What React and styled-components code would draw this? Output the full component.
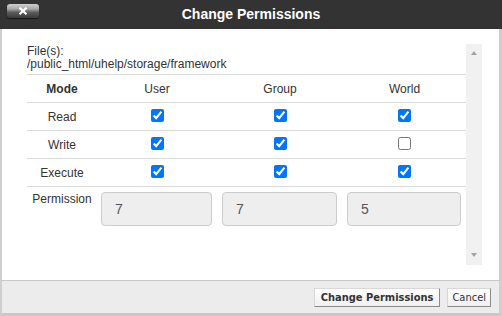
import styled, { createGlobalStyle } from "styled-components";

const GlobalStyle = createGlobalStyle`
  html, body {
    margin: 0;
    padding: 0;
    background: #fff;
  }
  body {
    font-family: "Liberation Sans", Arial, sans-serif;
  }
`;

const Dialog = styled.div`
  width: 502px;
  height: 316px;
  display: flex;
  flex-direction: column;
  box-sizing: border-box;
`;

const TitleBar = styled.div`
  position: relative;
  height: 29px;
  flex-shrink: 0;
  background: #333;
  display: flex;
  align-items: center;
  justify-content: center;
`;

const Title = styled.h1`
  margin: 0;
  color: #fff;
  font-size: 14px;
  font-weight: bold;
  line-height: 29px;
`;

const CloseButton = styled.button`
  position: absolute;
  left: 7px;
  top: 4px;
  width: 32px;
  height: 14px;
  padding: 0;
  border: 0;
  border-radius: 3px;
  background: linear-gradient(#d0d0d0 0%, #a8a8a8 35%, #5c5c5c 60%, #3a3a3a 100%);
  box-shadow: 0 1px 1px rgba(0, 0, 0, 0.6);
  display: flex;
  align-items: center;
  justify-content: center;
`;

const Body = styled.div`
  flex: 1;
  background: #fff;
  border-left: 2px solid #cfcfcf;
  border-right: 3px solid #cfcfcf;
  padding: 15px 17px 15px 25px;
  box-sizing: border-box;
  display: flex;
`;

const Scroller = styled.div`
  flex: 1;
  height: 221px;
  overflow: hidden;
  color: #333;
  font-size: 12px;
`;

const ScrollTrack = styled.div`
  width: 16px;
  height: 221px;
  flex-shrink: 0;
  background: #f1f1f1;
  display: flex;
  flex-direction: column;
  justify-content: space-between;
  align-items: center;
  padding: 7px 0 8px;
  box-sizing: border-box;
`;

const Arrow = styled.span`
  width: 0;
  height: 0;
  border-left: 3.5px solid transparent;
  border-right: 3.5px solid transparent;
  ${(p) =>
    p.$down
      ? "border-top: 4px solid #a3a3a3;"
      : "border-bottom: 4px solid #a3a3a3;"}
`;

const FileInfo = styled.div`
  padding-top: 1px;
  line-height: 13px;
  margin-bottom: 3px;
`;

const Table = styled.table`
  width: 100%;
  border-collapse: collapse;
  table-layout: fixed;
`;

const Th = styled.th`
  height: 27px;
  padding: 0;
  border-top: 1px solid #ddd;
  font-weight: ${(p) => (p.$bold ? "bold" : "normal")};
  text-align: center;
  vertical-align: middle;
  width: ${(p) => p.$w}px;
`;

const Td = styled.td`
  height: 27px;
  padding: 0;
  border-top: 1px solid #ddd;
  text-align: center;
  vertical-align: middle;
`;

const PermLabel = styled.td`
  border-top: 1px solid #ddd;
  padding: 6px 0 0;
  text-align: center;
  vertical-align: top;
  line-height: 13px;
`;

const PermCell = styled.td`
  border-top: 1px solid #ddd;
  padding: 5px ${(p) => p.$r}px 5px ${(p) => p.$l}px;
`;

const Check = styled.input.attrs({ type: "checkbox" })`
  display: block;
  margin: 0 auto;
  width: 13px;
  height: 13px;
  position: relative;
  top: -1px;
`;

const PermInput = styled.input`
  display: block;
  width: 100%;
  height: 34px;
  box-sizing: border-box;
  border: 1px solid #ccc;
  border-radius: 4px;
  background: #eee;
  color: #555;
  font-family: "Liberation Sans", Arial, sans-serif;
  font-size: 14px;
  padding: 0 13px;
  outline: none;
`;

const Footer = styled.div`
  height: 36px;
  flex-shrink: 0;
  box-sizing: border-box;
  background: #ececec;
  border-top: 1px solid #c8c8c8;
  border-left: 2px solid #cfcfcf;
  border-right: 3px solid #cfcfcf;
  border-bottom: 3px solid #c8c8c8;
  display: flex;
  justify-content: flex-end;
  align-items: flex-start;
  gap: 7px;
  padding: 7px 8px 0 0;
`;

const Button = styled.button`
  height: 19px;
  padding: 0 ${(p) => (p.$primary ? 6 : 4)}px;
  font-family: "DejaVu Sans Condensed", "DejaVu Sans", sans-serif;
  font-size: 11px;
  font-weight: ${(p) => (p.$primary ? "bold" : "normal")};
  color: #333;
  background: linear-gradient(#ffffff, #f0f0f0);
  border: 1px solid;
  border-color: #d8d8d8 #8a8a8a #8a8a8a #d8d8d8;
  border-radius: 0;
  line-height: 17px;
`;

const rows = [
  { mode: "Read", values: [true, true, true] },
  { mode: "Write", values: [true, true, false] },
  { mode: "Execute", values: [true, true, true] },
];

export default function App() {
  return (
    <>
      <GlobalStyle />
      <Dialog>
        <TitleBar>
          <CloseButton aria-label="Close">
            <svg width="10" height="8" viewBox="0 0 10 8">
              <path
                d="M1.5 0.8 L8.5 7.2 M8.5 0.8 L1.5 7.2"
                stroke="#fff"
                strokeWidth="2.2"
              />
            </svg>
          </CloseButton>
          <Title>Change Permissions</Title>
        </TitleBar>
        <Body>
          <Scroller>
            <FileInfo>
              File(s):
              <br />
              /public_html/uhelp/storage/framework
            </FileInfo>
            <Table>
              <thead>
                <tr>
                  <Th $bold $w={70}>Mode</Th>
                  <Th $w={120}>User</Th>
                  <Th $w={126}>Group</Th>
                  <Th>World</Th>
                </tr>
              </thead>
              <tbody>
                {rows.map((row) => (
                  <tr key={row.mode}>
                    <Td>{row.mode}</Td>
                    {row.values.map((v, i) => (
                      <Td key={i}>
                        <Check defaultChecked={v} />
                      </Td>
                    ))}
                  </tr>
                ))}
                <tr>
                  <PermLabel>Permission</PermLabel>
                  <PermCell $l={4} $r={5}>
                    <PermInput readOnly value="7" />
                  </PermCell>
                  <PermCell $l={5} $r={6}>
                    <PermInput readOnly value="7" />
                  </PermCell>
                  <PermCell $l={4} $r={5}>
                    <PermInput readOnly value="5" />
                  </PermCell>
                </tr>
              </tbody>
            </Table>
          </Scroller>
          <ScrollTrack>
            <Arrow />
            <Arrow $down />
          </ScrollTrack>
        </Body>
        <Footer>
          <Button $primary>Change Permissions</Button>
          <Button>Cancel</Button>
        </Footer>
      </Dialog>
    </>
  );
}
